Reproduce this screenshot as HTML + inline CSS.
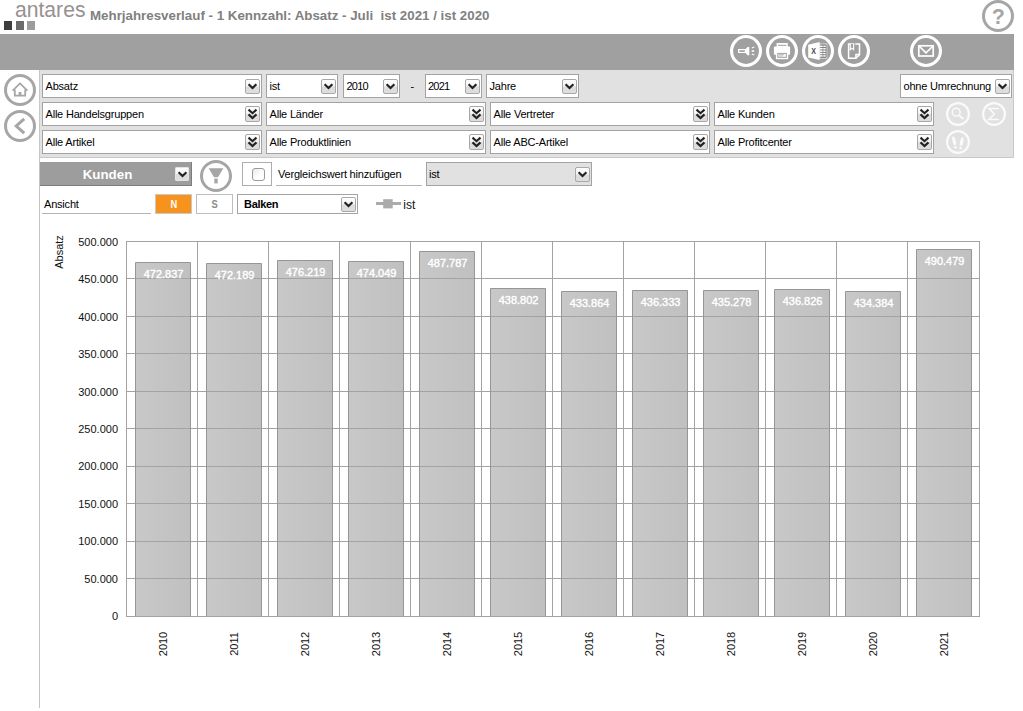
<!DOCTYPE html>
<html lang="de">
<head>
<meta charset="utf-8">
<title>Mehrjahresverlauf</title>
<style>
html,body{margin:0;padding:0;background:#fff;}
body{width:1023px;height:711px;position:relative;overflow:hidden;font-family:"Liberation Sans",Arial,sans-serif;font-size:11px;color:#000;}
.abs{position:absolute;}
#logo{left:14.8px;top:-2.8px;font-size:22px;color:#979191;transform-origin:0 0;transform:scaleX(0.96);white-space:nowrap;}
.sq{position:absolute;top:21px;width:8px;height:9px;}
#title{left:90px;top:8px;font-size:13.33px;font-weight:bold;color:#808080;white-space:pre;}
#bar{left:0;top:34px;width:1014px;height:35.5px;background:#a0a0a0;}
#panel{left:39px;top:69.5px;width:975px;height:88.5px;background:#e1e1e1;border-left:1px solid #c8c8c8;border-right:1px solid #c8c8c8;border-bottom:1px solid #c8c8c8;box-sizing:border-box;}
#vline{left:39px;top:157px;width:1px;height:551px;background:#c4c4c4;}
.sel{position:absolute;height:23px;box-sizing:border-box;border:1px solid #a3a3a3;background:#fff;padding-left:2.5px;white-space:nowrap;letter-spacing:-0.2px;}
.sel .btn{position:absolute;right:1px;top:4px;width:15px;height:15px;box-sizing:border-box;border:1px solid #a8a8a8;border-radius:2px;background:linear-gradient(#fff 0%,#f4f4f4 45%,#dcdcdc 55%,#dedede 100%);}
.sel .btn svg{position:absolute;left:0;top:0;}
#kunden{box-sizing:border-box;padding-top:1px;background:#9d9d9d;border-right:1px solid #7d7d7d;border-bottom:1px solid #7d7d7d;color:#fff;font-weight:bold;font-size:13.33px;line-height:23px;text-align:center;padding-right:16px;}
#kunden .btn{box-sizing:border-box;border:1px solid #e4e4e4;border-radius:1px;background:linear-gradient(#fff 0%,#f4f4f4 45%,#dcdcdc 55%,#dedede 100%);}
#kunden .btn svg{position:absolute;left:0;top:0;}
.ul{border-bottom:1px solid #b4b4b4;letter-spacing:-0.2px;white-space:nowrap;}
.sel.small .btn{top:2px;}
.nar{display:inline-block;transform:scaleX(0.85);}
.sel.dbl .btn{top:3px;height:16px;}
</style>
</head>
<body>
<div id="logo" class="abs">antares</div>
<div class="sq" style="left:4px;background:#3e3e3e"></div>
<div class="sq" style="left:15.6px;background:#6b6b6b"></div>
<div class="sq" style="left:27.3px;background:#9c9c9c"></div>
<div id="title" class="abs">Mehrjahresverlauf - 1 Kennzahl: Absatz - Juli  ist 2021 / ist 2020</div>
<div id="bar" class="abs"></div>
<div id="panel" class="abs"></div>
<div id="vline" class="abs"></div>
<div class="sel " style="left:42px;top:74px;width:219.5px;height:24px;line-height:22px;">Absatz<span class="btn"><svg width="13" height="13" viewBox="0 0 13 13"><path d="M2.6 4.2 L6.5 8 L10.4 4.2" fill="none" stroke="#222" stroke-width="2.2"/></svg></span></div>
<div class="sel " style="left:266px;top:74px;width:71.5px;height:24px;line-height:22px;">ist<span class="btn"><svg width="13" height="13" viewBox="0 0 13 13"><path d="M2.6 4.2 L6.5 8 L10.4 4.2" fill="none" stroke="#222" stroke-width="2.2"/></svg></span></div>
<div class="sel " style="left:343px;top:74px;width:56.5px;height:24px;line-height:22px;letter-spacing:-0.75px;">2010<span class="btn"><svg width="13" height="13" viewBox="0 0 13 13"><path d="M2.6 4.2 L6.5 8 L10.4 4.2" fill="none" stroke="#222" stroke-width="2.2"/></svg></span></div>
<div class="abs" style="left:410.5px;top:74px;line-height:24px;">-</div>
<div class="sel " style="left:424.5px;top:74px;width:57px;height:24px;line-height:22px;letter-spacing:-0.75px;">2021<span class="btn"><svg width="13" height="13" viewBox="0 0 13 13"><path d="M2.6 4.2 L6.5 8 L10.4 4.2" fill="none" stroke="#222" stroke-width="2.2"/></svg></span></div>
<div class="sel " style="left:486px;top:74px;width:92.5px;height:24px;line-height:22px;">Jahre<span class="btn"><svg width="13" height="13" viewBox="0 0 13 13"><path d="M2.6 4.2 L6.5 8 L10.4 4.2" fill="none" stroke="#222" stroke-width="2.2"/></svg></span></div>
<div class="sel " style="left:900px;top:74px;width:111.5px;height:24px;line-height:22px;">ohne Umrechnung<span class="btn"><svg width="13" height="13" viewBox="0 0 13 13"><path d="M2.6 4.2 L6.5 8 L10.4 4.2" fill="none" stroke="#222" stroke-width="2.2"/></svg></span></div>
<div class="sel  dbl" style="left:42px;top:102px;width:219.5px;height:24px;line-height:22px;">Alle Handelsgruppen<span class="btn"><svg width="13" height="14" viewBox="0 0 13 14"><path d="M2.5 2.6 L6.5 6.2 L10.5 2.6 M2.5 7.4 L6.5 11 L10.5 7.4" fill="none" stroke="#222" stroke-width="2.1"/></svg></span></div>
<div class="sel  dbl" style="left:266px;top:102px;width:219.5px;height:24px;line-height:22px;">Alle Länder<span class="btn"><svg width="13" height="14" viewBox="0 0 13 14"><path d="M2.5 2.6 L6.5 6.2 L10.5 2.6 M2.5 7.4 L6.5 11 L10.5 7.4" fill="none" stroke="#222" stroke-width="2.1"/></svg></span></div>
<div class="sel  dbl" style="left:490px;top:102px;width:219.5px;height:24px;line-height:22px;">Alle Vertreter<span class="btn"><svg width="13" height="14" viewBox="0 0 13 14"><path d="M2.5 2.6 L6.5 6.2 L10.5 2.6 M2.5 7.4 L6.5 11 L10.5 7.4" fill="none" stroke="#222" stroke-width="2.1"/></svg></span></div>
<div class="sel  dbl" style="left:714px;top:102px;width:219.5px;height:24px;line-height:22px;">Alle Kunden<span class="btn"><svg width="13" height="14" viewBox="0 0 13 14"><path d="M2.5 2.6 L6.5 6.2 L10.5 2.6 M2.5 7.4 L6.5 11 L10.5 7.4" fill="none" stroke="#222" stroke-width="2.1"/></svg></span></div>
<div class="sel  dbl" style="left:42px;top:130px;width:219.5px;height:24px;line-height:22px;">Alle Artikel<span class="btn"><svg width="13" height="14" viewBox="0 0 13 14"><path d="M2.5 2.6 L6.5 6.2 L10.5 2.6 M2.5 7.4 L6.5 11 L10.5 7.4" fill="none" stroke="#222" stroke-width="2.1"/></svg></span></div>
<div class="sel  dbl" style="left:266px;top:130px;width:219.5px;height:24px;line-height:22px;">Alle Produktlinien<span class="btn"><svg width="13" height="14" viewBox="0 0 13 14"><path d="M2.5 2.6 L6.5 6.2 L10.5 2.6 M2.5 7.4 L6.5 11 L10.5 7.4" fill="none" stroke="#222" stroke-width="2.1"/></svg></span></div>
<div class="sel  dbl" style="left:490px;top:130px;width:219.5px;height:24px;line-height:22px;">Alle ABC-Artikel<span class="btn"><svg width="13" height="14" viewBox="0 0 13 14"><path d="M2.5 2.6 L6.5 6.2 L10.5 2.6 M2.5 7.4 L6.5 11 L10.5 7.4" fill="none" stroke="#222" stroke-width="2.1"/></svg></span></div>
<div class="sel  dbl" style="left:714px;top:130px;width:219.5px;height:24px;line-height:22px;">Alle Profitcenter<span class="btn"><svg width="13" height="14" viewBox="0 0 13 14"><path d="M2.5 2.6 L6.5 6.2 L10.5 2.6 M2.5 7.4 L6.5 11 L10.5 7.4" fill="none" stroke="#222" stroke-width="2.1"/></svg></span></div>
<svg class="abs" style="left:727.9px;top:32.9px" width="36" height="36" viewBox="-18 -18 36 36"><circle r="14.45" fill="none" stroke="#fff" stroke-width="3.1"/><g fill="#fff"><path d="M-8 -2 H-0.4 L1.6 -4.1 H3.3 V4.2 H1.6 L-0.4 2.1 H-8 Z"/><rect x="5.7" y="-0.7" width="2.5" height="1.5"/><path d="M5.6 -3.4 L8.1 -4.6 L8.5 -3.6 L6 -2.4 Z"/><path d="M5.6 3.4 L8.1 4.6 L8.5 3.6 L6 2.4 Z"/></g><rect x="-6.6" y="-0.8" width="5.4" height="1.7" fill="#a0a0a0"/></svg>
<svg class="abs" style="left:764px;top:32.9px" width="36" height="36" viewBox="-18 -18 36 36"><circle r="14.45" fill="none" stroke="#fff" stroke-width="3.1"/><g fill="#fff"><rect x="-5.4" y="-8" width="11.2" height="5"/><rect x="-8.1" y="-4.4" width="16.2" height="8.1" rx="1"/><rect x="-6.1" y="0.8" width="12.3" height="7.4"/></g><rect x="-4" y="-6.2" width="8.4" height="1" fill="#a0a0a0"/><rect x="-4.7" y="1.9" width="9.5" height="4.9" fill="#a0a0a0"/><rect x="-3.7" y="2.9" width="7.5" height="2.9" fill="#fff"/><rect x="-3.2" y="3.4" width="5.4" height="0.8" fill="#a0a0a0"/><rect x="-3.2" y="4.7" width="4" height="0.6" fill="#a0a0a0"/></svg>
<svg class="abs" style="left:800px;top:32.9px" width="36" height="36" viewBox="-18 -18 36 36"><circle r="14.45" fill="none" stroke="#fff" stroke-width="3.1"/><g><rect x="1.5" y="-7.3" width="7.7" height="14.8" fill="#fff"/><rect x="2.2" y="-6.6" width="6.4" height="13.4" fill="#727272"/><g fill="#fff"><rect x="2" y="-5.4" width="5.7" height="1.5"/><rect x="2" y="-3" width="5.7" height="1.5"/><rect x="2" y="-0.6" width="5.7" height="1.5"/><rect x="2" y="1.8" width="5.7" height="1.5"/><rect x="2" y="4.2" width="5.7" height="1.5"/></g><rect x="4.6" y="-6.4" width="0.7" height="13" fill="#8a8a8a"/><path d="M-9.8 -6.2 L1.6 -9 V8.9 L-9.8 6.5 Z" fill="#fff"/><text x="-4.5" y="3.1" font-size="8.6" font-weight="bold" font-family="Liberation Sans, sans-serif" text-anchor="middle" fill="#444" transform="translate(-4.5 0) scale(0.82 1) translate(4.5 0)">X</text></g></svg>
<svg class="abs" style="left:836px;top:32.9px" width="36" height="36" viewBox="-18 -18 36 36"><circle r="14.45" fill="none" stroke="#fff" stroke-width="3.1"/><path d="M-5.4 -7 H5.5 V3.6 H1.9 V7.2 H-5.4 Z" fill="none" stroke="#fff" stroke-width="1.5"/><path d="M5.5 3.6 L1.9 7.2" fill="none" stroke="#fff" stroke-width="1.5"/><rect x="0.2" y="-8" width="1" height="2" fill="#a0a0a0"/><path d="M-3.7 -7 V-1.2 L-2.05 -2.8 L-0.4 -1.2 V-7" fill="#a0a0a0" stroke="#fff" stroke-width="1.1"/></svg>
<svg class="abs" style="left:908.1px;top:32.9px" width="36" height="36" viewBox="-18 -18 36 36"><circle r="14.45" fill="none" stroke="#fff" stroke-width="3.1"/><rect x="-7.2" y="-5.2" width="14.4" height="10.2" fill="none" stroke="#fff" stroke-width="1.7"/><path d="M-7 -5 L0 1.8 L7 -5" fill="none" stroke="#fff" stroke-width="1.7"/></svg>
<svg class="abs" style="left:980px;top:-2px" width="36" height="36" viewBox="-18 -18 36 36"><circle r="14.5" fill="none" stroke="#a6a6a6" stroke-width="3"/><text x="0.3" y="7.6" font-size="21.5" font-weight="bold" font-family="Liberation Sans, sans-serif" text-anchor="middle" fill="#a6a6a6">?</text></svg>
<svg class="abs" style="left:2px;top:72px" width="36" height="36" viewBox="-18 -18 36 36"><circle r="14.5" fill="none" stroke="#a6a6a6" stroke-width="3"/><path d="M-7.4 0.6 L0 -6.6 L7.4 0.6" fill="none" stroke="#a6a6a6" stroke-width="1.8"/><path d="M-5.2 -0.6 V5.6 H5.2 V-0.6" fill="none" stroke="#a6a6a6" stroke-width="1.8"/><rect x="-1.4" y="2" width="2.8" height="3.6" fill="#a6a6a6"/></svg>
<svg class="abs" style="left:2px;top:108px" width="36" height="36" viewBox="-18 -18 36 36"><circle r="14.5" fill="none" stroke="#a6a6a6" stroke-width="3"/><path d="M4.2 -7.2 L-3.8 0 L4.2 7.2" fill="none" stroke="#a6a6a6" stroke-width="3"/></svg>
<svg class="abs" style="left:944px;top:100px" width="28" height="28" viewBox="-14 -14 28 28"><circle r="10.9" fill="none" stroke="#fafafa" stroke-width="2.2"/><circle cx="-1.8" cy="-1.8" r="3.9" fill="none" stroke="#fafafa" stroke-width="1.5"/><path d="M1.4 1.8 L5.3 5" stroke="#fafafa" stroke-width="2" fill="none"/></svg>
<svg class="abs" style="left:980px;top:100px" width="28" height="28" viewBox="-14 -14 28 28"><circle r="10.9" fill="none" stroke="#fafafa" stroke-width="2.2"/><path d="M4.8 -5.6 H-5.2 L0.4 0 L-5.2 5.4 H4.8" fill="none" stroke="#fafafa" stroke-width="1.5"/></svg>
<svg class="abs" style="left:944px;top:128px" width="28" height="28" viewBox="-14 -14 28 28"><circle r="10.9" fill="none" stroke="#fafafa" stroke-width="2.2"/><g fill="#fafafa"><path d="M-5.6 -5.4 C-3.6 -6.4 -2.2 -3 -1.6 2.6 L-4 3.2 C-5.6 0 -6.4 -3.4 -5.6 -5.4 Z"/><path d="M5.2 -4.6 C3.2 -5.6 2.2 -2 1.6 3.4 L4 4 C5.4 1 6.2 -2.6 5.2 -4.6 Z"/><ellipse cx="-2.5" cy="5.2" rx="1.5" ry="1.3"/><ellipse cx="2.6" cy="6" rx="1.5" ry="1.3"/></g></svg>
<div class="abs" id="kunden" style="left:40px;top:162px;width:152px;height:24px;">Kunden<span class="btn" style="position:absolute;right:2px;top:5px;width:14px;height:14px;"><svg width="13" height="13" viewBox="0 0 13 13"><path d="M2.6 4.2 L6.5 8 L10.4 4.2" fill="none" stroke="#222" stroke-width="2.2"/></svg></span></div>
<svg class="abs" style="left:198px;top:158px" width="36" height="36" viewBox="-18 -18 36 36"><circle r="14.5" fill="none" stroke="#a6a6a6" stroke-width="3"/><path d="M-7.4 -7.8 H7.4 L2 1.2 H-2 Z" fill="#a6a6a6"/><rect x="-1.7" y="2.6" width="3.4" height="4.8" fill="#a6a6a6"/></svg>
<div class="abs" style="left:242px;top:162px;width:30px;height:24px;box-sizing:border-box;border:1px solid #adadad;background:#fff;"><span style="position:absolute;left:9px;top:4.5px;width:13px;height:13px;box-sizing:border-box;border:1.3px solid #9a9a9a;border-radius:3px;background:linear-gradient(135deg,#e9e9e9,#fff 60%);"></span></div>
<div class="abs ul" style="left:276px;top:162px;width:145.5px;height:24px;line-height:24px;padding-left:2px;box-sizing:border-box;">Vergleichswert hinzufügen</div>
<div class="sel " style="left:425.5px;top:162px;width:166.5px;height:24px;line-height:22px;background:#e1e1e1;">ist<span class="btn"><svg width="13" height="13" viewBox="0 0 13 13"><path d="M2.6 4.2 L6.5 8 L10.4 4.2" fill="none" stroke="#222" stroke-width="2.2"/></svg></span></div>
<div class="abs ul" style="left:42px;top:194px;width:108.5px;height:20px;line-height:20px;padding-left:2px;box-sizing:border-box;">Ansicht</div>
<div class="abs" style="left:155px;top:194px;width:37px;height:20px;box-sizing:border-box;border:1px solid #c9c9c9;background:#f7931d;color:#fff;font-weight:bold;text-align:center;line-height:18px;font-size:11px;"><span class="nar">N</span></div>
<div class="abs" style="left:196px;top:194px;width:37px;height:20px;box-sizing:border-box;border:1px solid #bdbdbd;background:#fff;color:#8a8a8a;font-weight:bold;text-align:center;line-height:18px;font-size:11px;"><span class="nar">S</span></div>
<div class="sel small" style="left:237px;top:194px;width:120.5px;height:20px;line-height:18px;font-weight:bold;padding-left:6px;letter-spacing:-0.3px;">Balken<span class="btn"><svg width="13" height="13" viewBox="0 0 13 13"><path d="M2.6 4.2 L6.5 8 L10.4 4.2" fill="none" stroke="#222" stroke-width="2.2"/></svg></span></div>
<svg class="abs" style="left:374px;top:196px" width="50" height="16" viewBox="374 196 50 16"><line x1="376" y1="203.5" x2="401" y2="203.5" stroke="#ababab" stroke-width="3"/><rect x="383.2" y="199.2" width="9.5" height="9.2" fill="#ababab"/><text x="403.3" y="208.6" font-size="12" font-family="Liberation Sans, sans-serif" fill="#111">ist</text></svg>
<svg class="abs" id="chart" style="left:40px;top:225px" width="983" height="486" viewBox="40 225 983 486" font-family="Liberation Sans, sans-serif" font-size="11">
<defs><linearGradient id="bg" x1="0" y1="0" x2="1" y2="0"><stop offset="0" stop-color="#c8c8c8"/><stop offset="1" stop-color="#c0c0c0"/></linearGradient></defs>
<rect x="135.5" y="262.5" width="55" height="354.0" fill="url(#bg)"/>
<rect x="206.5" y="263.5" width="55" height="353.0" fill="url(#bg)"/>
<rect x="277.5" y="260.5" width="55" height="356.0" fill="url(#bg)"/>
<rect x="348.5" y="261.5" width="55" height="355.0" fill="url(#bg)"/>
<rect x="419.5" y="251.5" width="55" height="365.0" fill="url(#bg)"/>
<rect x="490.5" y="288.5" width="55" height="328.0" fill="url(#bg)"/>
<rect x="561.5" y="291.5" width="55" height="325.0" fill="url(#bg)"/>
<rect x="632.5" y="290.5" width="55" height="326.0" fill="url(#bg)"/>
<rect x="703.5" y="290.5" width="55" height="326.0" fill="url(#bg)"/>
<rect x="774.5" y="289.5" width="55" height="327.0" fill="url(#bg)"/>
<rect x="845.5" y="291.5" width="55" height="325.0" fill="url(#bg)"/>
<rect x="916.5" y="249.5" width="55" height="367.0" fill="url(#bg)"/>
<g stroke="#a3a3a3" stroke-width="1" shape-rendering="crispEdges"><line x1="126" y1="241.5" x2="980" y2="241.5"/><line x1="126" y1="278.5" x2="980" y2="278.5"/><line x1="126" y1="316.5" x2="980" y2="316.5"/><line x1="126" y1="353.5" x2="980" y2="353.5"/><line x1="126" y1="391.5" x2="980" y2="391.5"/><line x1="126" y1="428.5" x2="980" y2="428.5"/><line x1="126" y1="466.5" x2="980" y2="466.5"/><line x1="126" y1="503.5" x2="980" y2="503.5"/><line x1="126" y1="541.5" x2="980" y2="541.5"/><line x1="126" y1="578.5" x2="980" y2="578.5"/><line x1="126" y1="616.5" x2="980" y2="616.5"/><line x1="126.5" y1="241" x2="126.5" y2="617"/><line x1="197.5" y1="241" x2="197.5" y2="617"/><line x1="268.5" y1="241" x2="268.5" y2="617"/><line x1="339.5" y1="241" x2="339.5" y2="617"/><line x1="410.5" y1="241" x2="410.5" y2="617"/><line x1="481.5" y1="241" x2="481.5" y2="617"/><line x1="552.5" y1="241" x2="552.5" y2="617"/><line x1="623.5" y1="241" x2="623.5" y2="617"/><line x1="694.5" y1="241" x2="694.5" y2="617"/><line x1="765.5" y1="241" x2="765.5" y2="617"/><line x1="836.5" y1="241" x2="836.5" y2="617"/><line x1="907.5" y1="241" x2="907.5" y2="617"/><line x1="979.5" y1="241" x2="979.5" y2="617"/></g>
<path d="M135.5 616.5 V262.5 H190.5 V616.5" fill="none" stroke="#969696" stroke-width="1"/>
<path d="M206.5 616.5 V263.5 H261.5 V616.5" fill="none" stroke="#969696" stroke-width="1"/>
<path d="M277.5 616.5 V260.5 H332.5 V616.5" fill="none" stroke="#969696" stroke-width="1"/>
<path d="M348.5 616.5 V261.5 H403.5 V616.5" fill="none" stroke="#969696" stroke-width="1"/>
<path d="M419.5 616.5 V251.5 H474.5 V616.5" fill="none" stroke="#969696" stroke-width="1"/>
<path d="M490.5 616.5 V288.5 H545.5 V616.5" fill="none" stroke="#969696" stroke-width="1"/>
<path d="M561.5 616.5 V291.5 H616.5 V616.5" fill="none" stroke="#969696" stroke-width="1"/>
<path d="M632.5 616.5 V290.5 H687.5 V616.5" fill="none" stroke="#969696" stroke-width="1"/>
<path d="M703.5 616.5 V290.5 H758.5 V616.5" fill="none" stroke="#969696" stroke-width="1"/>
<path d="M774.5 616.5 V289.5 H829.5 V616.5" fill="none" stroke="#969696" stroke-width="1"/>
<path d="M845.5 616.5 V291.5 H900.5 V616.5" fill="none" stroke="#969696" stroke-width="1"/>
<path d="M916.5 616.5 V249.5 H971.5 V616.5" fill="none" stroke="#969696" stroke-width="1"/>
<text x="163.6" y="278.0" text-anchor="middle" fill="#fff" stroke="#fff" stroke-width="0.4">472.837</text>
<text transform="translate(167.2 644) rotate(-90)" text-anchor="middle" fill="#111">2010</text>
<text x="234.6" y="279.0" text-anchor="middle" fill="#fff" stroke="#fff" stroke-width="0.4">472.189</text>
<text transform="translate(238.2 644) rotate(-90)" text-anchor="middle" fill="#111">2011</text>
<text x="305.6" y="276.0" text-anchor="middle" fill="#fff" stroke="#fff" stroke-width="0.4">476.219</text>
<text transform="translate(309.2 644) rotate(-90)" text-anchor="middle" fill="#111">2012</text>
<text x="376.6" y="277.0" text-anchor="middle" fill="#fff" stroke="#fff" stroke-width="0.4">474.049</text>
<text transform="translate(380.2 644) rotate(-90)" text-anchor="middle" fill="#111">2013</text>
<text x="447.6" y="267.0" text-anchor="middle" fill="#fff" stroke="#fff" stroke-width="0.4">487.787</text>
<text transform="translate(451.2 644) rotate(-90)" text-anchor="middle" fill="#111">2014</text>
<text x="518.6" y="304.0" text-anchor="middle" fill="#fff" stroke="#fff" stroke-width="0.4">438.802</text>
<text transform="translate(522.2 644) rotate(-90)" text-anchor="middle" fill="#111">2015</text>
<text x="589.6" y="307.0" text-anchor="middle" fill="#fff" stroke="#fff" stroke-width="0.4">433.864</text>
<text transform="translate(593.2 644) rotate(-90)" text-anchor="middle" fill="#111">2016</text>
<text x="660.6" y="306.0" text-anchor="middle" fill="#fff" stroke="#fff" stroke-width="0.4">436.333</text>
<text transform="translate(664.2 644) rotate(-90)" text-anchor="middle" fill="#111">2017</text>
<text x="731.6" y="306.0" text-anchor="middle" fill="#fff" stroke="#fff" stroke-width="0.4">435.278</text>
<text transform="translate(735.2 644) rotate(-90)" text-anchor="middle" fill="#111">2018</text>
<text x="802.6" y="305.0" text-anchor="middle" fill="#fff" stroke="#fff" stroke-width="0.4">436.826</text>
<text transform="translate(806.2 644) rotate(-90)" text-anchor="middle" fill="#111">2019</text>
<text x="873.6" y="307.0" text-anchor="middle" fill="#fff" stroke="#fff" stroke-width="0.4">434.384</text>
<text transform="translate(877.2 644) rotate(-90)" text-anchor="middle" fill="#111">2020</text>
<text x="944.6" y="265.0" text-anchor="middle" fill="#fff" stroke="#fff" stroke-width="0.4">490.479</text>
<text transform="translate(948.2 644) rotate(-90)" text-anchor="middle" fill="#111">2021</text>
<text x="118" y="246.1" text-anchor="end" fill="#111">500.000</text>
<text x="118" y="283.48" text-anchor="end" fill="#111">450.000</text>
<text x="118" y="320.86" text-anchor="end" fill="#111">400.000</text>
<text x="118" y="358.24" text-anchor="end" fill="#111">350.000</text>
<text x="118" y="395.62" text-anchor="end" fill="#111">300.000</text>
<text x="118" y="433.0" text-anchor="end" fill="#111">250.000</text>
<text x="118" y="470.38" text-anchor="end" fill="#111">200.000</text>
<text x="118" y="507.76000000000005" text-anchor="end" fill="#111">150.000</text>
<text x="118" y="545.14" text-anchor="end" fill="#111">100.000</text>
<text x="118" y="582.52" text-anchor="end" fill="#111">50.000</text>
<text x="118" y="619.9" text-anchor="end" fill="#111">0</text>
<text transform="translate(63 252) rotate(-90)" text-anchor="middle" fill="#111">Absatz</text>
</svg>
</body>
</html>
